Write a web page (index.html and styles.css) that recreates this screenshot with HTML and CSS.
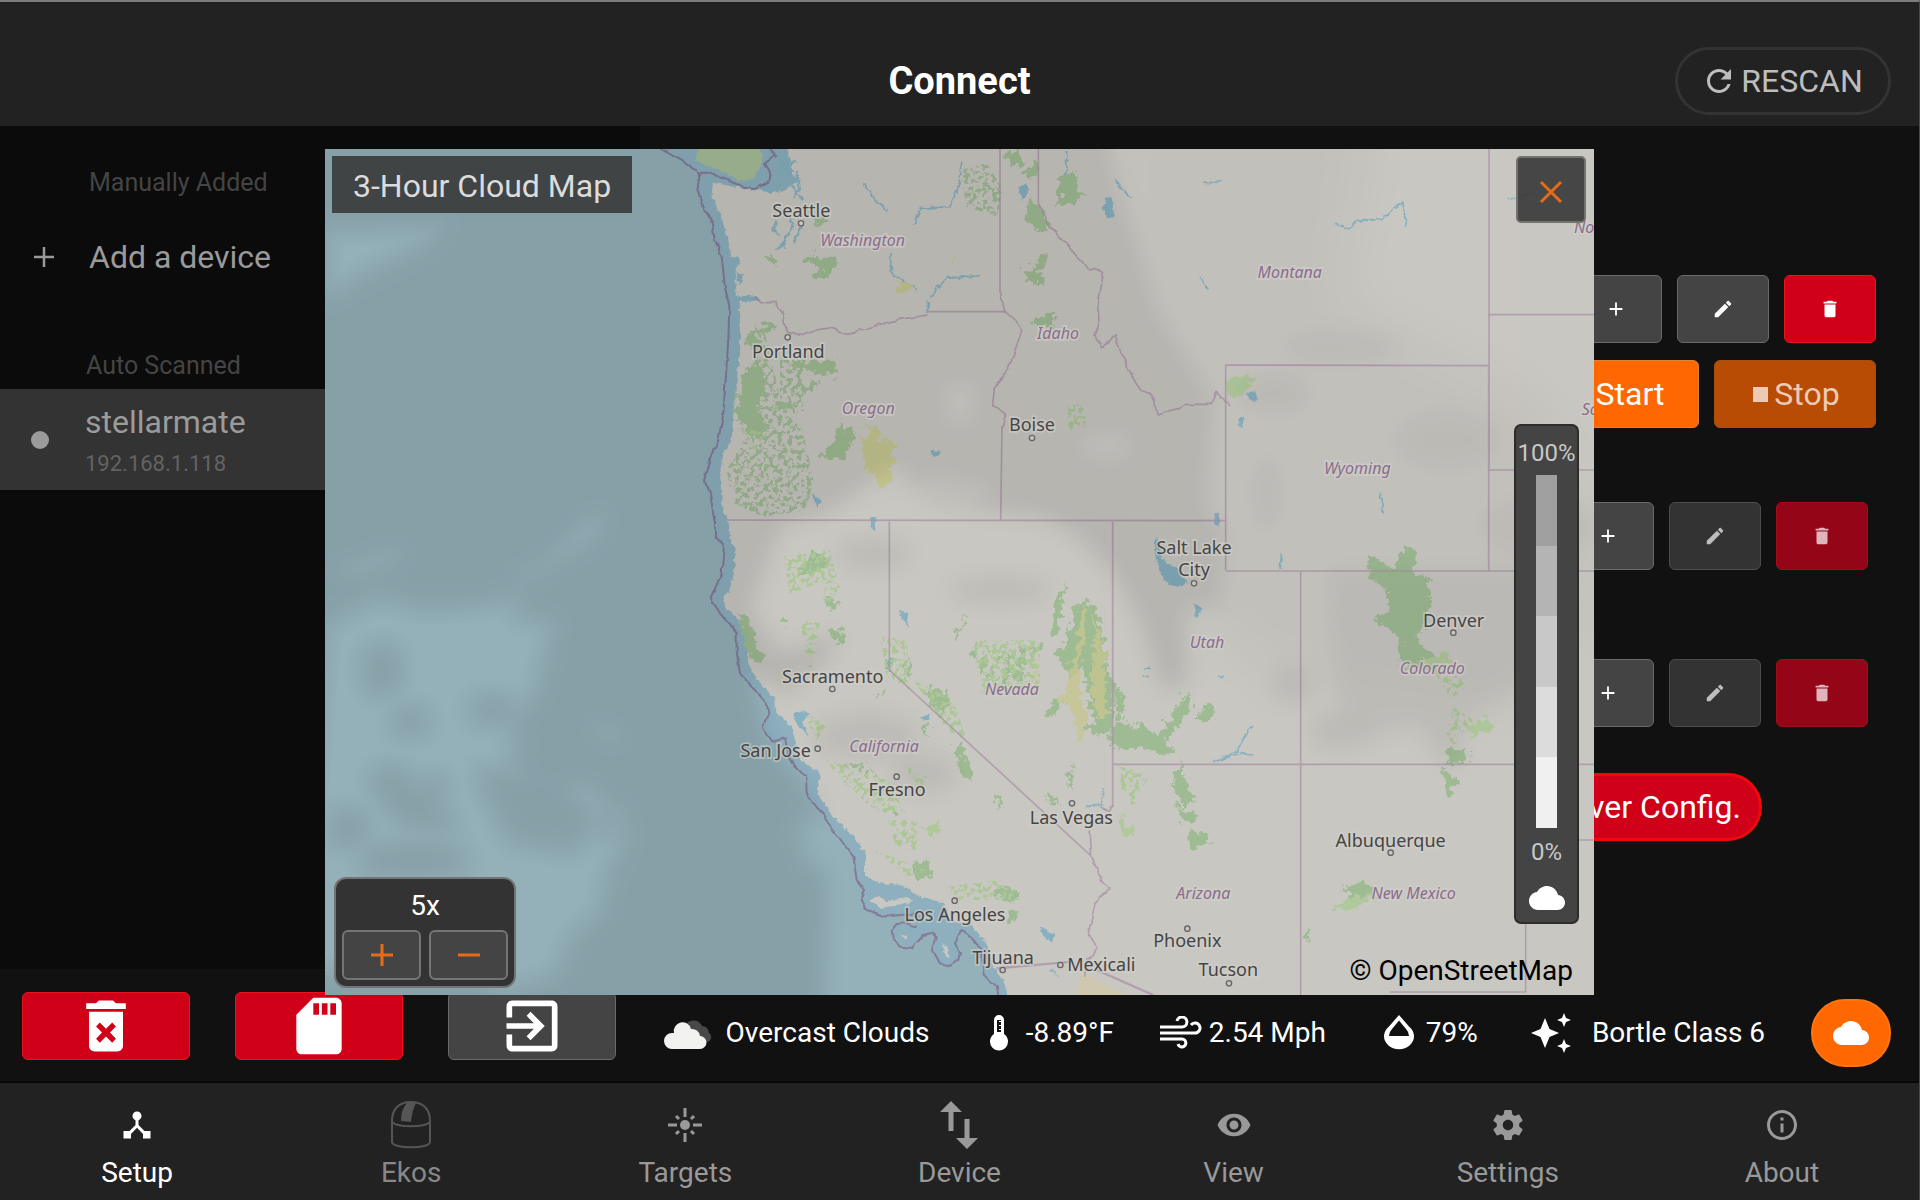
FILE: index.html
```html
<!DOCTYPE html>
<html lang="en">
<head>
<meta charset="utf-8">
<title>Connect</title>
<link rel="stylesheet" href="styles.css">
</head>
<body>
<svg class="sprite" aria-hidden="true">
  <symbol id="i-plus" viewBox="0 0 24 24"><path d="M19 13h-6v6h-2v-6H5v-2h6V5h2v6h6z"/></symbol>
  <symbol id="i-edit" viewBox="0 0 24 24"><path d="M3 17.25V21h3.75L17.81 9.94l-3.75-3.75L3 17.25zM20.71 7.04c.39-.39.39-1.02 0-1.41l-2.34-2.34c-.39-.39-1.02-.39-1.41 0l-1.83 1.83 3.75 3.75 1.83-1.83z"/></symbol>
  <symbol id="i-delete" viewBox="0 0 24 24"><path d="M6 19c0 1.1.9 2 2 2h8c1.1 0 2-.9 2-2V7H6v12zM19 4h-3.5l-1-1h-5l-1 1H5v2h14V4z"/></symbol>
  <symbol id="i-cloud" viewBox="0 0 24 24"><path d="M19.35 10.04C18.67 6.59 15.64 4 12 4 9.11 4 6.6 5.64 5.35 8.04 2.34 8.36 0 10.91 0 14c0 3.31 2.69 6 6 6h13c2.76 0 5-2.24 5-5 0-2.64-2.05-4.78-4.65-4.96z"/></symbol>
</svg>

<div class="app">
  <header class="topbar">
    <h1>Connect</h1>
    <button class="rescan" type="button">
      <svg class="icon-lg" viewBox="0 0 24 24"><path d="M17.65 6.35C16.2 4.9 14.21 4 12 4c-4.42 0-7.99 3.58-7.99 8s3.57 8 7.99 8c3.73 0 6.84-2.55 7.73-6h-2.08c-.82 2.33-3.04 4-5.65 4-3.31 0-6-2.69-6-6s2.69-6 6-6c1.66 0 3.14.69 4.22 1.78L13 11h7V4l-2.35 2.35z"/></svg>
      <span>RESCAN</span>
    </button>
  </header>

  <div class="content">
    <aside class="devices">
      <h2>Manually Added</h2>
      <button class="add-device" type="button"><svg class="icon-md" viewBox="0 0 24 24"><path d="M20 13h-7v7h-2v-7H4v-2h7V4h2v7h7z"/></svg><span>Add a device</span></button>
      <h2 class="scanned">Auto Scanned</h2>
      <a class="device" href="#stellarmate"><i class="dot"></i><span class="device-text"><span class="name">stellarmate</span><span class="ip">192.168.1.118</span></span></a>
    </aside>

    <main class="panel">
      <div class="row">
        <button class="btn sq" type="button" aria-label="Add profile"><svg class="icon-sm"><use href="#i-plus"/></svg></button>
        <button class="btn sq" type="button" aria-label="Edit profile"><svg class="icon-sm"><use href="#i-edit"/></svg></button>
        <button class="btn sq red" type="button" aria-label="Delete profile"><svg class="icon-sm"><use href="#i-delete"/></svg></button>
      </div>
      <div class="row actions">
        <button class="btn orange" type="button"><svg class="glyph" viewBox="0 0 14 14"><path d="M1 0l12 7-12 7z"/></svg><span>Start</span></button>
        <button class="btn orange off" type="button" disabled><svg class="glyph" viewBox="0 0 14 14"><path d="M0 0h14v14H0z"/></svg><span>Stop</span></button>
      </div>
      <div class="row inner scope">
        <button class="btn sq" type="button" aria-label="Add item"><svg class="icon-sm"><use href="#i-plus"/></svg></button>
        <button class="btn sq off" type="button" disabled aria-label="Edit item"><svg class="icon-sm"><use href="#i-edit"/></svg></button>
        <button class="btn sq red off" type="button" disabled aria-label="Delete item"><svg class="icon-sm"><use href="#i-delete"/></svg></button>
      </div>
      <div class="row inner camera">
        <button class="btn sq" type="button" aria-label="Add item"><svg class="icon-sm"><use href="#i-plus"/></svg></button>
        <button class="btn sq off" type="button" disabled aria-label="Edit item"><svg class="icon-sm"><use href="#i-edit"/></svg></button>
        <button class="btn sq red off" type="button" disabled aria-label="Delete item"><svg class="icon-sm"><use href="#i-delete"/></svg></button>
      </div>
      <div class="row drivers"><button class="pill" type="button">Driver Config.</button></div>
    </main>
  </div>

  <section class="status">
    <div class="tools">
      <button class="btn red" type="button" aria-label="Clear"><svg class="icon-xl" viewBox="0 0 24 24"><path fill-rule="evenodd" d="M6 7h12v12c0 1.1-.9 2-2 2H8c-1.1 0-2-.9-2-2zM8.5 12.2l1.3-1.4L12 13l2.2-2.2 1.3 1.4-2.1 2.1 2.1 2.2-1.3 1.4-2.2-2.2-2.2 2.2-1.3-1.4 2.1-2.2zM19 4h-3.5l-1-1h-5l-1 1H5v2h14z"/></svg></button>
      <button class="btn red" type="button" aria-label="Storage"><svg class="icon-xl" viewBox="0 0 24 24"><path fill-rule="evenodd" d="M18 2h-8L4 8v12c0 1.1.9 2 2 2h12c1.1 0 2-.9 2-2V4c0-1.100-.9-2-2-2zM10 4h2v4h-2zM13 4h2v4h-2zM16 4h2v4h-2z"/></svg></button>
      <button class="btn" type="button" aria-label="Exit"><svg class="icon-xl" viewBox="0 0 24 24"><path d="M10.090 15.590L11.500 17l5-5-5-5-1.410 1.410L12.670 11H3v2h9.670l-2.580 2.590zM19 3H5c-1.110 0-2 .9-2 2v4h2V5h14v14H5v-4H3v4c0 1.100.89 2 2 2h14c1.100 0 2-.9 2-2V5c0-1.100-.9-2-2-2z"/></svg></button>
    </div>
    <div class="weather">
      <div class="item"><svg width="50" height="32" viewBox="0 0 50 32"><path fill="#48484a" d="M21 10a9 9 0 0 1 17-1 7 7 0 0 1 7 7 5 5 0 0 1-2 9H24z"/><path fill="#f2f2f0" d="M8 32a8 8 0 0 1 0-16h2a8.500 8.500 0 0 1 17-4 8 8 0 0 1 9 7 6.500 6.500 0 0 1 0 13z"/></svg><span>Overcast Clouds</span></div>
      <div class="item temp"><svg width="20" height="36" viewBox="0 0 20 36"><path fill-rule="evenodd" d="M5 5a5 5 0 0 1 10 0v14a9 9 0 1 1-10 0zM8 5v12h4v-2h-2v-1h2v-3h-2v-1h2V7h-2V6h2V5z"/></svg><span>-8.89°F</span></div>
      <div class="item wind"><svg width="42" height="33" viewBox="0 0 42 33"><g fill="none" stroke="#fff" stroke-width="3"><path d="M0 11h22a5 5 0 1 0-5-6M0 17h35a5 5 0 1 0-4-8M0 23h22a4 4 0 1 1-4 5"/></g></svg><span>2.54 Mph</span></div>
      <div class="item"><svg width="30" height="36" viewBox="0 0 30 36"><path fill-rule="evenodd" d="M15 0l10 11.500a15 13 0 1 1-20 0zM15 5.500L8 14q-3 3-3 7h20q0-4-3-7z"/></svg><span>79%</span></div>
      <div class="item bortle"><svg width="40" height="40" viewBox="0 0 40 40"><path d="M14 5l4.500 11L28 20l-9.500 4L14 35 9.500 24 0 20l9.500-4zM33 0l2 5 5 2-5 2-2 5-2-5-5-2 5-2zM33 26l2 5 5 2-5 2-2 5-2-5-5-2 5-2z"/></svg><span>Bortle Class 6</span></div>
      <button class="cloud-btn" type="button" aria-label="Cloud map"><svg class="icon-nav"><use href="#i-cloud"/></svg></button>
    </div>
  </section>

  <nav class="tabs">
    <a class="active" href="#setup"><svg class="icon-nav" viewBox="0 0 24 24"><path d="M17 16l-4-4V8.820C14.160 8.400 15 7.300 15 6c0-1.660-1.340-3-3-3S9 4.340 9 6c0 1.300.84 2.400 2 2.820V12l-4 4H3v5h5v-3.050l4-4.200 4 4.200V21h5v-5h-4z"/></svg><span>Setup</span></a>
    <a class="dim" href="#ekos"><svg width="42" height="48" viewBox="0 0 42 48"><g fill="none" stroke="#555" stroke-width="2"><path d="M2 20C2 8 9 1 21 1s19 7 19 19v21c0 7-38 7-38 0zM2 20c0 7 38 7 38 0"/></g><path fill="#555" d="M17 2l9 0q-4 8-5 19l-10-1Q11 8 17 2z"/></svg><span>Ekos</span></a>
    <a href="#targets"><svg width="34" height="34" viewBox="0 0 34 34"><circle cx="17" cy="17" r="5"/><path d="M15.500 0h3v9h-3zM15.500 25h3v9h-3zM0 15.500h9v3H0zM25 15.500h9v3h-9z"/><path fill="none" stroke="#999" stroke-width="3" d="M8 8l3 3M26 8l-3 3M8 26l3-3M26 26l-3-3"/></svg><span>Targets</span></a>
    <a href="#device"><svg width="38" height="48" viewBox="0 0 38 48"><path d="M11 0l11 11h-8.500v19h-5V11H0zM27 48l11-11h-8.500V18h-5v19H16z"/></svg><span>Device</span></a>
    <a href="#view"><svg class="icon-nav" viewBox="0 0 24 24"><path d="M12 4.500C7 4.500 2.730 7.610 1 12c1.730 4.390 6 7.500 11 7.500s9.270-3.110 11-7.500c-1.730-4.390-6-7.500-11-7.500zM12 17c-2.760 0-5-2.240-5-5s2.240-5 5-5 5 2.240 5 5-2.240 5-5 5zm0-8c-1.660 0-3 1.340-3 3s1.340 3 3 3 3-1.340 3-3-1.340-3-3-3z"/></svg><span>View</span></a>
    <a href="#settings"><svg class="icon-nav" viewBox="0 0 24 24"><path d="M19.430 12.980c.04-.32.07-.64.07-.98s-.03-.66-.07-.98l2.110-1.650c.19-.15.24-.42.12-.64l-2-3.460c-.12-.22-.39-.3-.61-.22l-2.490 1c-.52-.4-1.080-.73-1.690-.98l-.38-2.650C14.460 2.180 14.250 2 14 2h-4c-.25 0-.46.18-.49.42l-.38 2.650c-.61.25-1.170.59-1.690.98l-2.490-1c-.23-.09-.49 0-.61.22l-2 3.460c-.13.22-.07.49.12.64l2.110 1.650c-.04.32-.07.65-.07.98s.03.66.07.98l-2.110 1.650c-.19.15-.24.42-.12.64l2 3.460c.12.22.39.3.61.22l2.490-1c.52.4 1.080.73 1.690.98l.38 2.650c.03.24.24.42.49.42h4c.25 0 .46-.18.49-.42l.38-2.650c.61-.25 1.170-.59 1.690-.98l2.490 1c.23.09.49 0 .61-.22l2-3.460c.12-.22.07-.49-.12-.64l-2.110-1.650zM12 15.500c-1.930 0-3.500-1.570-3.500-3.500s1.570-3.500 3.500-3.500 3.500 1.570 3.500 3.500-1.570 3.500-3.500 3.500z"/></svg><span>Settings</span></a>
    <a href="#about"><svg class="icon-nav" viewBox="0 0 24 24"><path d="M11 7h2v2h-2zM11 11h2v6h-2zm1-9C6.480 2 2 6.480 2 12s4.480 10 10 10 10-4.480 10-10S17.520 2 12 2zm0 18c-4.410 0-8-3.590-8-8s3.590-8 8-8 8 3.590 8 8-3.590 8-8 8z"/></svg><span>About</span></a>
  </nav>
</div>

<div class="overlay">
  <section class="cloud-map" aria-label="3-Hour Cloud Map">
    <svg class="map" viewBox="-945 27 3807 2538" preserveAspectRatio="xMidYMid slice">
      <defs>
        <filter id="soft" x="-20%" y="-20%" width="140%" height="140%"><feGaussianBlur stdDeviation="30"/></filter>
        <filter id="softer" x="-20%" y="-20%" width="140%" height="140%"><feGaussianBlur stdDeviation="75"/></filter>
        <filter id="rough" x="-5%" y="-5%" width="110%" height="110%"><feTurbulence type="fractalNoise" baseFrequency=".06" numOctaves="3" seed="4"/><feDisplacementMap in="SourceGraphic" scale="16" xChannelSelector="R" yChannelSelector="G"/></filter>
        <filter id="ragged" x="-5%" y="-5%" width="110%" height="110%"><feTurbulence type="fractalNoise" baseFrequency=".045" numOctaves="4" seed="12"/><feDisplacementMap in="SourceGraphic" scale="48" xChannelSelector="R" yChannelSelector="G"/></filter>
        <filter id="wobble" x="-5%" y="-5%" width="110%" height="110%"><feTurbulence type="fractalNoise" baseFrequency=".03" numOctaves="2" seed="7"/><feDisplacementMap in="SourceGraphic" scale="14" xChannelSelector="R" yChannelSelector="G"/></filter>
        <filter id="speckle" x="-5%" y="-5%" width="110%" height="110%"><feTurbulence type="fractalNoise" baseFrequency=".07" numOctaves="4" seed="9"/><feColorMatrix values="0 0 0 0 0 0 0 0 0 0 0 0 0 0 0 12 0 0 0 -6"/><feComposite in="SourceGraphic" operator="in"/></filter>
        <mask id="cover" maskUnits="userSpaceOnUse" x="-945" y="27" width="3807" height="2538">
          <g filter="url(#softer)"><path fill="#fff" fill-opacity=".35" d="M1400-100H2200L2100 500 2700 800 2900 1400 2600 1700 1900 1600 1500 1300z"/></g>
          <g filter="url(#soft)">
            <path fill="#fff" d="M-1050-100H1380L1460 200 1560 520 1720 780 1700 1100 1760 1180 1740 1400 1640 1400 1640 1640 1560 1640 1500 1440 1420 1300 1300 1180 1200 1130 900 1100 760 980 560 1120 420 1160 330 1400 420 1540 600 1480 560 1560 440 1660 330 1600 380 1800 540 2000 480 2160 560 2200 550 2700-1050 2700z"/>
            <g fill="#fff" fill-opacity=".6"><ellipse cx="680" cy="1790" rx="160" ry="70"/><ellipse cx="850" cy="1900" rx="100" ry="60"/><ellipse cx="1080" cy="1350" rx="150" ry="40"/><ellipse cx="700" cy="1240" rx="110" ry="50"/><path d="M2060 1280h620v350l-180 90-60 180-120-150-160 60-80-170z"/><ellipse cx="1960" cy="1630" rx="70" ry="60"/><ellipse cx="2090" cy="1770" rx="80" ry="60"/><ellipse cx="2100" cy="620" rx="180" ry="50" fill-opacity=".5"/><ellipse cx="2420" cy="900" rx="160" ry="90" fill-opacity=".5"/><ellipse cx="1900" cy="760" rx="110" ry="60"/><ellipse cx="1880" cy="1060" rx="40" ry="110" fill-opacity=".6"/><ellipse cx="2700" cy="1160" rx="180" ry="90" fill-opacity=".5"/></g>
            <g fill="#000"><path d="M-960 250L-560 247-640 330-820 420-960 500zM-90 1110l-40 90-180 110-100 10 120-60 130-130zM-930 1290l200-70 30 30-140 60zM-960 1440l180-90 120 40 160-10 180-30-60 60 140 30-60 240-90 90 60 40-60 60 100 60 140 0 60 60-30 90 100 30-60 90-20 130-80 60-60 130-170 60-80-60-560 0z"/>
              <ellipse cx="-100" cy="1780" rx="50" ry="20" transform="rotate(30 -100 1780)"/><ellipse cx="-60" cy="2050" rx="25" ry="60"/><ellipse cx="500" cy="2080" rx="40" ry="70"/><ellipse cx="960" cy="790" rx="50" ry="70" fill-opacity=".5"/><ellipse cx="1400" cy="920" rx="80" ry="40" fill-opacity=".5"/><ellipse cx="900" cy="1060" rx="160" ry="50" fill-opacity=".5"/></g>
            <g fill="#fff"><ellipse cx="-775" cy="1590" rx="40" ry="60"/><ellipse cx="-690" cy="1745" rx="40" ry="24"/><ellipse cx="-440" cy="1710" rx="60" ry="24"/><path d="M-480 1900l230 30 110 100-60 90-180-30z"/><path d="M-800 1920l60-30 130 120 60 60-160-30z"/><ellipse cx="-875" cy="2065" rx="45" ry="40"/><ellipse cx="-680" cy="2160" rx="150" ry="35"/><ellipse cx="-620" cy="1950" rx="25" ry="30"/></g>
          </g>
        </mask>
      </defs>
      <rect x="-945" y="27" width="3807" height="2538" fill="#94b0b9"/>
      <path fill="#8aafc0" fill-opacity=".7" d="M62 27L130 65 180 98 172 150 190 200 215 245 225 300 245 350 255 440 268 500 265 600 250 820 235 900 205 970 192 1020 210 1060 225 1150 225 1190 252 1215 245 1300 212 1375 240 1420 290 1480 290 1530 300 1600 380 1690 385 1720 368 1760 380 1790 400 1805 435 1795 451 1860 498 1910 500 1960 580 2070 640 2150 650 2220 675 2250 662 2280 680 2310 735 2330 830 2320 830 2360 780 2350 755 2370 770 2405 810 2425 840 2390 880 2380 890 2395 878 2430 900 2470 930 2478 960 2450 950 2420 960 2370 1000 2400 1025 2430 1030 2500 1070 2540 1075 2565H1200V27z"/>
      <g filter="url(#rough)">
        <path fill="#c9c7c2" d="M2900 0H450L440 80 475 120 430 155 340 150 218 128 215 170 240 220 262 290 275 350 300 360 285 400 290 470 300 500 300 560 300 640 290 720 280 820 275 900 250 940 240 1000 245 1080 250 1120 265 1140 270 1190 287 1240 280 1320 275 1340 250 1370 255 1400 300 1440 320 1510 325 1570 350 1620 400 1670 410 1720 455 1760 465 1800 480 1860 540 1900 530 1960 580 2030 640 2090 675 2140 675 2210 720 2230 790 2235 830 2265 910 2290 930 2340 1000 2360 1040 2410 1060 2480 1090 2520 1115 2600H2900z"/>
        <path fill="#c9c7c2" d="M690 2278l30-6 20 12 60-10 20 8-50 14-50 8zM905 2410l15 10 12 35-12-5zM780 2380l25 15-10 6z"/>
        <path fill="#a6bf98" d="M165 60L180 20H355L370 55 340 115 310 125 220 85z"/>
        <g fill="#87b0c0">
          <path d="M435 20l25 70-10 20-20-20-10 60-30 10-20-15 40-20zM285 470l60-4 20 12-40 8-38-2zM280 350l25 8-15 14zM287 400l22 6-12 36zM860 478l12 20-14 24zM1138 140l20-8 12 20-25 30-6-25zM1400 172l16 4 6 55-18 4-16-30zM780 1412l20 5 8 45-22-20zM735 1558l25-5-5 40-20 0zM1205 2358l40 30-15 18-30-30zM690 1130l20 2-5 38-16-8zM515 1060l28 20-10 24zM460 1720l35-8 15 14-24 14 20 50-36-40zM1663 1387l25 20-20 32zM840 950l20 3M870 930l35 5-25 18zM1720 1120l20 0-4 40-14-10zM1820 760l24 -10 10 30-16 6zM1800 832l10 0-2 32-10-4z"/>
          <path d="M1545 1190l12 10 10 60 50 30 25 40-30 10-30-10-25-40-12-50zM845 1728l25-5-2 15-20 4z"/>
        </g>
        <g fill="none" stroke="#87b0c0" stroke-width="7"><path d="M400 40l40 40 30-20M440 110l30 50 20 20M470 90l10 60-20 20M450 230l10 30-30 50-20 20M485 250l-10 30-15 30M410 240l-10 30 20 20M440 290l-10 30"/></g>
        <g fill="none" stroke="#87b0c0" stroke-width="5"><path d="M670 130l40 55 30 25M825 250l15-45 90-5 25-60 10-75M750 340l5 60 75 50M870 470l50-55 100-8M2085 250l40 20 20-25 80-8 60-50 15 70M1720 1865l70-30 45-80M1740 1860l60-20 40 5M1690 130l55-8M1425 120l45 55M1680 410l25 40M2220 1060l10 60M1925 1240l-5 50M2600 180l80-20M1335 2000l50-5 4-50M1230 2490l20 4M1240 2505l20 6M1510 1588l20-4M1510 1608l16-2M1735 1612l18-4M1280 30l0 60-20 30"/></g>
      </g>
      <g filter="url(#ragged)">
        <g fill="#9ebb93">
          <path d="M1090 40l50-20 10 50-35 5zM1150 100l45-40 0 55zM1250 105l60-5 5 55 30 10-65 25-35 20 20-35-15-40zM1162 178l40 20 30 60-35 20-35-35zM1190 345l25-10 10 20-25 50 10 30-50-5-15-40 45-10zM1185 540l40-18 20 5-5 35-60-5zM498 345l30-5 10 35-40-5zM530 355l50-5 5 35-40 30-20-5zM380 345l20-4 4 30-25-5zM535 230l30 5-10 25-30-5zM600 840l30 30 25 15-40 50-5 25-65-5 40-60zM300 715l50-60 20 30 5 60-20 60 30 70-45 30-40-60-10 0zM450 665l140-10-5 50-50-5-70-15zM475 735l60-10 5 20-50 10-40-5zM410 790l65 0 0 10-60 5zM325 580l30-20 55-15-5 20-50 20 5 50-40-20z"/>
          <path d="M500 1260l20-35 50 35-5 20-90 20zM545 1375l30 0 20 20-25 25zM300 1420l25 10 30 90 15 50-35-5-20-60zM420 1440l25-10-2 25-20-2zM575 1465l25-3 20 35-30 20-15-20zM800 1560l10 0 5 50-15 0zM1240 1400l40-80-25 160-20 5zM940 1490l50-75-20 45-20 35zM1000 1520l10 0 5 30-15 5zM1040 1610l50-90 15-20-60 130zM1020 1560l20-20 0 60-20 10zM1085 1630l20-100 10 20-10 80zM1120 1620l20-100 20 5-20 100zM1185 1510l25 5-30 40-20 40zM1210 1735l30-60 30 0-20 50zM1245 1540l40-50 20-90 30-20 30 20 20 60 20 120 20 60-10 130-50 20-30-30 30-10-40-170-20 30-20 0zM710 1660l35-15-30 30zM945 1820l25-10 10 60 15 60-20-10-20-50zM850 1750l20 10-15 25zM860 1650l20-10 50 40-20 50-50-50zM1205 1955l45 10 10 40zM1285 1935l10-60 6 40-6 40zM1065 1970l15 5-6 40zM1060 2250l50-10 35 20-20 30-70-20zM1105 2310l25 5 5 35-30-5zM810 2170l50-10 20 50-60 5z"/>
          <path d="M2180 1260l30-10 50 40 20-40 10-30 30-2 10 40-5 40 45 20-5 50 10 20-20 80-30 20 45 50 20 50-60 0-50-20 0-60-20-40-60-30 50-30-10-60-40-20zM1400 1790l40-50 40 20 30-10 40 40 40-50 40-70-5-10 30 5 0 40-80 100 30 20-30 20-70-20-40 5-60-15zM1425 1640l20 20 10 60-25 20zM1595 1930l30-70 25 90 15 30-30 20zM1610 1990l70 40-20 20-40-10zM1640 2075l70 10 0 30-50 15zM1660 1740l50-50 10 40-50 15zM2420 1830l60 0 10 35-70 5zM2410 1890l25 10 20 30-30 40-15-20zM2100 2250l50-20 50 10 0 40-60-5zM2000 2370l15 5-5 30-15-10z"/>
          <path fill="#b0c99c" d="M845 2055l55-5-10 35-35 0zM2080 2300l80-40 40 10-50 30-60 10zM2490 1760l50-30 25 30-70 30zM1430 2020l30 30 30 30-40 10zM1760 720l80-15 0 15-40 45-40 10zM2340 1560l80-20 10 30-80 10z"/>
        </g>
        <g fill="#c5c690"><path d="M648 860l50-7 20 20 0 30 42-5-5 130-15-5-20 30-10-10 0-40-30-5-10-50 0-60 30-5 0-15zM770 425l20 0 30 30-30-5-20-5zM935 335l15 40-5-20z"/><path fill-opacity=".8" d="M1320 1400l20 0-5 120-20 60 10 110 20 20-10 60-20 50-10-100-45-40 30-90 20-60zM1360 1420l20 60 20 80-10 100 20 60-30 20-30-90 10-90z"/><path fill-opacity=".5" d="M1180 1590l20-30 0 40-20 30z"/></g>
      </g>
      <path fill="#cfc8af" d="M1325 2495l130 70H1310z"/>
      <g filter="url(#speckle)">
        <path fill="#a0ba96" d="M370 560l60 250 60 60 30 150-20 90-130 20-90-40-20-100 70-120 20-200zM420 660l60 0 20 150-80 20zM960 90l80-20 50 80-20 80-90-30zM610 1870l70-5 80 110 20 60-100-40-50-70z"/>
        <path fill="#aac795" d="M480 1440l60 10-30 160zM720 1490l80 10 10 150-70-40zM480 1700l80 60-30 40zM560 1860l180 60 60 100-90-10-110-90zM740 2040l90 0 0 90-60-10zM2370 1570l120 60-60 50zM430 1250l140-20 20 80-140 50zM1440 1880l90 20-50 100-50-70zM1280 800l50-10 10 70-60 10zM800 1870l60 40-10 60-40-60zM700 2130l160 60-60 20zM920 2240l160-20 60 60-180 0zM2440 1700l60 40-60 80-20-40zM300 860l80 20-40 60zM1000 1500l200 0 0 140-180 20zM820 1620l120 60 40 120-60-30zM540 1280l60 60-40 60z"/>
      </g>
      <g fill="none" stroke="#a892a6" stroke-opacity=".75" stroke-width="5" filter="url(#wobble)">
        <path d="M345 470l20 18 40 0 20 25 15 60 45 14 50-18 40-6 38 20 60-16 100-28 90-14M1080 455l15 60 45 40 5 20-40 110-42 60-5 50 38 30-10 40M1195 190l35 70 100 110 15 20 20-5 25 15-15 90 5 50-15 50 20 30 40-35 20 60 40 80 20 30 30 10 20 60 60-20 20-12 80 0 15-35 40 40M1418 1995l-12 20-25-15M1350 2070l5 80 30 70 22 30-42 40-20 90 25 40-10 30-20 10-6 50"/>
      </g>
      <g fill="none" stroke="#a892a6" stroke-opacity=".75" stroke-width="5">
        <path d="M1080 27V455M1195 27V190M862 515H1095M1086 860L1082 1140M262 1140Q800 1138 1757 1142M748 1145V1590L1350 2145M1418 1145V1995M1757 1290V675L2546 677V1293M1757 1293H2862M1982 1293V2565M1418 1873H2862M2547 27V677M2547 524H2862M2547 677V990H2862M2657 2300V2556H2250M2657 1873V2100H2862"/>
        <path stroke-width="7" d="M1070 2485L1300 2465M1370 2490L1540 2565"/>
      </g>
      <g fill="none" stroke="#847c98" stroke-width="6" stroke-linejoin="round" filter="url(#wobble)">
        <path d="M62 27L130 65 180 98 200 98 260 118 310 140 350 145 385 125 390 95 375 70 408 45 390 27M180 98L172 150 190 200 215 245 225 300 245 350 255 440 268 500 265 600 250 820 235 900 205 970 192 1020 210 1060 225 1150 225 1190 252 1215 245 1300 212 1375 240 1420 290 1480 290 1530 300 1600 380 1690 385 1720 368 1760 380 1790 400 1805 435 1795 451 1860 498 1910 500 1960 580 2070 640 2150 650 2220 675 2250 662 2280 680 2310 735 2330 830 2320M830 2360L800 2350 770 2352 755 2370 758 2395 785 2420 815 2424 838 2400 845 2385 880 2378 890 2395 878 2430 900 2470 930 2478 955 2460 960 2440 945 2410 965 2370 1000 2400 1025 2430 1030 2500 1070 2540 1075 2570"/>
      </g>
      <rect x="-945" y="27" width="3807" height="2538" fill="#000" fill-opacity=".09" mask="url(#cover)"/>
      <g class="town-dots"><circle cx="483" cy="250" r="8"/><circle cx="443" cy="592" r="8"/><circle cx="1176" cy="894" r="8"/><circle cx="577" cy="1647" r="8"/><circle cx="533" cy="1826" r="8"/><circle cx="770" cy="1910" r="8"/><circle cx="1296" cy="1990" r="8"/><circle cx="944" cy="2282" r="8"/><circle cx="1088" cy="2490" r="8"/><circle cx="1261" cy="2475" r="8"/><circle cx="1662" cy="1330" r="8"/><circle cx="2440" cy="1478" r="8"/><circle cx="2252" cy="2138" r="8"/><circle cx="1642" cy="2366" r="8"/><circle cx="1767" cy="2530" r="8"/></g>
      <g class="towns"><text x="484" y="230">Seattle</text><text x="445" y="654">Portland</text><text x="1176" y="874">Boise</text><text x="578" y="1628">Sacramento</text><text x="407" y="1850">San Jose</text><text x="771" y="1968">Fresno</text><text x="1294" y="2053">Las Vegas</text><text x="945" y="2343">Los Angeles</text><text x="1089" y="2471">Tijuana</text><text x="1384" y="2494">Mexicali</text><text x="1662" y="1241">Salt Lake</text><text x="1662" y="1308">City</text><text x="2441" y="1460">Denver</text><text x="2252" y="2121">Albuquerque</text><text x="1642" y="2422">Phoenix</text><text x="1765" y="2508">Tucson</text></g>
      <g class="states"><text x="668" y="319">Washington</text><text x="1254" y="597">Idaho</text><text x="685" y="823">Oregon</text><text x="1949" y="413">Montana</text><text x="2152" y="1002">Wyoming</text><text x="1116" y="1664">Nevada</text><text x="732" y="1837">California</text><text x="1701" y="1524">Utah</text><text x="2377" y="1602">Colorado</text><text x="1690" y="2277">Arizona</text><text x="2321" y="2278">New Mexico</text><text class="cut" x="2802" y="280">No</text><text class="cut" x="2825" y="824">So</text></g>
    </svg>
    <h2 class="map-title">3-Hour Cloud Map</h2>
    <button class="close" type="button" aria-label="Close"><svg width="24" height="24" viewBox="0 0 24 24"><path d="M2 2l20 20M22 2L2 22"/></svg></button>
    <div class="legend">
      <span>100%</span>
      <div class="scale"><i class="s1"></i><i class="s2"></i><i class="s3"></i><i class="s4"></i><i class="s5"></i></div>
      <span>0%</span>
      <svg class="icon-nav"><use href="#i-cloud"/></svg>
    </div>
    <div class="zoomer">
      <span>5x</span>
      <div class="zoom-buttons">
        <button type="button" aria-label="Zoom in"><svg width="24" height="24" viewBox="0 0 24 24"><path d="M12 1v22M1 12h22"/></svg></button>
        <button type="button" aria-label="Zoom out"><svg width="24" height="24" viewBox="0 0 24 24"><path d="M1 12h22"/></svg></button>
      </div>
    </div>
    <a class="credit" href="#osm">© OpenStreetMap</a>
  </section>
</div>
</body>
</html>
```
FILE: styles.css
```css
* { box-sizing: border-box; }
body { margin: 0; background: #111; color: #fff; font-family: Roboto, "Liberation Sans", sans-serif; font-size: 28px; line-height: 32px; }
h1, h2 { margin: 0; font-weight: 400; }
button { font: inherit; color: inherit; padding: 0; margin: 0; cursor: pointer; }
a { color: inherit; text-decoration: none; }
svg { display: block; fill: currentColor; flex: none; }
.sprite { position: absolute; width: 0; height: 0; }
.icon-sm { width: 22px; height: 22px; }
.icon-md { width: 30px; height: 30px; }
.icon-lg { width: 36px; height: 36px; }
.icon-nav { width: 36px; height: 36px; }
.icon-xl { width: 68px; height: 68px; }

.app { min-height: 100vh; display: flex; flex-direction: column; border-top: 2px solid #7c7c7c; border-right: 1px solid #4a4a4a; }

.topbar { height: 124px; background: #222; display: grid; grid-template-columns: 1fr auto 1fr; align-items: center; padding: 34px 28px 0; }
.topbar h1 { grid-column: 2; font-size: 38px; line-height: 44px; font-weight: 700; }
.rescan { justify-self: end; display: flex; align-items: center; justify-content: center; gap: 4px; width: 216px; height: 68px; padding-right: 2px; border: 3px solid #333; border-radius: 34px; background: none; color: #bdbdbd; font-size: 32px; }

.content { flex: 1; display: flex; }
.devices { width: 33.33%; background: #0b0b0b; padding-top: 41px; }
.devices h2 { padding-left: 89px; font-size: 25px; color: #444; }
.add-device { display: flex; align-items: center; gap: 30px; padding: 42px 0 42px 29px; border: 0; background: none; color: #9a9a9a; font-size: 32px; }
.devices .scanned { padding: 35px 0 7px 86px; }
.device { display: flex; align-items: center; gap: 36px; height: 101px; padding-left: 31px; background: #333; }
.dot { width: 18px; height: 18px; border-radius: 9px; background: #9b9b9b; }
.device-text { display: flex; flex-direction: column; gap: 10px; padding-top: 6px; }
.name { font-size: 32px; color: #9b9b9b; }
.ip { font-size: 22px; color: #636363; }

.panel { flex: 1; padding: 149px 43px 0; display: flex; flex-direction: column; }
.row { display: flex; justify-content: flex-end; gap: 15px; }
.inner { padding-right: 8px; }
.actions { margin-top: 17px; }
.scope { margin-top: 74px; }
.camera { margin-top: 89px; }
.drivers { margin-top: 46px; padding-right: 114px; }
.btn { display: flex; align-items: center; justify-content: center; gap: 6px; height: 68px; border: 1px solid #6a6a6a; border-radius: 6px; background: #444; font-size: 32px; }
.sq { width: 92px; }
.glyph { width: 15px; height: 15px; }
.red { background: #d00019; border-color: #ea1420; }
.orange { width: 162px; padding-left: 3px; background: #ff6700; border-color: #e08038; }
.btn.off { background: #333; border-color: #4c4c4c; color: #bdbdbd; }
.btn.red.off { background: #950518; border-color: #a30d1a; color: #dfb4ba; }
.btn.orange.off { background: #b84c04; border-color: #a4500f; color: #edcab4; }
.pill { height: 68px; padding: 0 18px; border: 3px solid #f0090c; border-radius: 34px; background: #d00019; font-size: 32px; }

.status { display: flex; height: 114px; align-items: center; background: #111; border-bottom: 2px solid #060606; }
.tools { width: 33.33%; display: flex; gap: 45px; padding: 2px 24px 0 22px; }
.tools .btn { flex: 1; }
.weather { flex: 1; display: grid; grid-template-columns: 325fr 171fr 224fr 147fr 280fr 80px; align-items: center; padding: 15px 28px 0 24px; }
.item { display: flex; align-items: center; gap: 12px; white-space: nowrap; }
.temp { gap: 17px; }
.wind { gap: 7px; }
.bortle { gap: 21px; }
.cloud-btn { display: grid; place-items: center; width: 80px; height: 68px; border: 2px solid #ff7410; border-radius: 34px; background: #ff6700; }

.tabs { height: 117px; display: grid; grid-template-columns: repeat(7, 1fr); background: #222; color: #999; }
.tabs a { display: grid; grid-template-rows: 48px 32px; gap: 8px; place-items: center; align-content: start; padding-top: 18px; }
.tabs .active { color: #fff; }
.tabs .dim { color: #888; }

.overlay { position: absolute; inset: 0 1px 56px 0; display: grid; place-items: center; }
.cloud-map { position: relative; width: calc(100% - 650px); aspect-ratio: 3 / 2; overflow: hidden; }
.map { width: 100%; height: 100%; }
.towns text, .states text { font-family: "Noto Sans", sans-serif; text-anchor: middle; paint-order: stroke; stroke: #d2d0cc; stroke-opacity: 0.6; stroke-width: 10px; }
.towns text { font-size: 54px; fill: #454545; }
.states text { font-size: 48px; font-style: italic; fill: #8a6d8c; }
.states .cut { text-anchor: start; }
.town-dots { fill: #c8c6c2; stroke: #666; stroke-width: 4px; }

.map-title { position: absolute; left: 7px; top: 7px; padding: 14px 21px 11px; background: rgba(52, 52, 52, 0.85); color: #dcdcdc; font-size: 32px; line-height: 32px; }
.close { position: absolute; right: 8px; top: 7px; display: grid; place-items: center; width: 70px; height: 67px; padding-top: 4px; border: 2px solid #727270; border-radius: 5px; background: rgba(52, 52, 52, 0.88); }
.close path, .zoomer path { fill: none; stroke: #e86c18; stroke-width: 3px; }
.legend { position: absolute; right: 15px; top: 275px; width: 65px; display: flex; flex-direction: column; align-items: center; padding: 11px 0 6px; background: #444; border: 2px solid #2c2c2c; border-radius: 7px; color: #c8c8c8; font-size: 24px; }
.legend svg { margin-top: 12px; color: #fff; }
.scale { display: flex; flex-direction: column; width: 21px; height: 353px; margin: 6px 0 8px; }
.scale i { flex: 1; }
.s1 { background: #a0a0a0; }
.s2 { background: #b4b4b4; }
.s3 { background: #c8c8c8; }
.s4 { background: #dcdcdc; }
.s5 { background: #f0f0f0; }
.zoomer { position: absolute; left: 9px; bottom: 7px; width: 182px; height: 111px; padding: 11px 6px 0; border: 2px solid #747474; border-radius: 12px; background: #333; text-align: center; }
.zoom-buttons { display: flex; gap: 8px; margin-top: 8px; }
.zoomer button { flex: 1; height: 50px; display: grid; place-items: center; border: 2px solid #757575; border-radius: 6px; background: #444; }
.credit { position: absolute; right: 21px; bottom: 8px; color: #000; }
```
